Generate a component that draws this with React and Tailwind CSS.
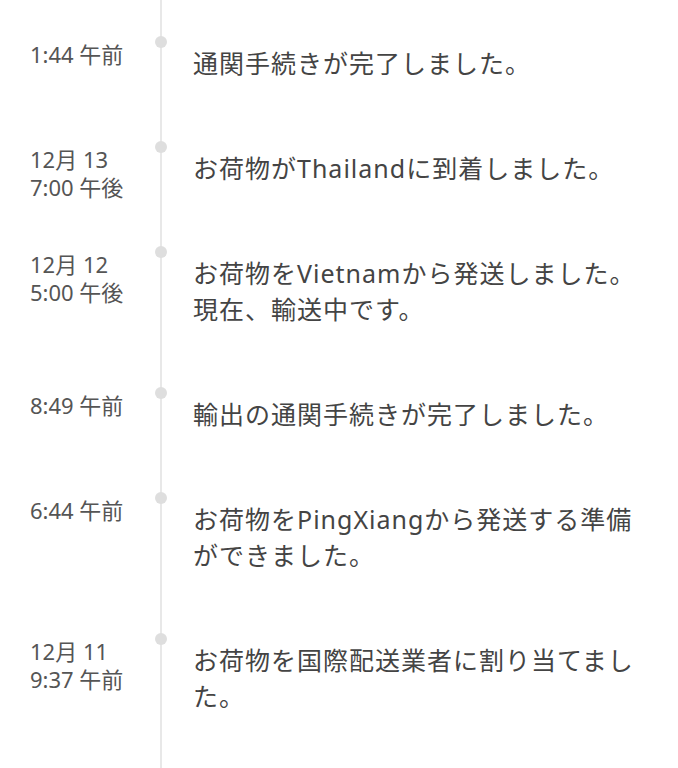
import React from 'react';

const events = [
  { time: ['1:44 午前'], text: ['通関手続きが完了しました。'] },
  { time: ['12月 13', '7:00 午後'], text: ['お荷物がThailandに到着しました。'] },
  { time: ['12月 12', '5:00 午後'], text: ['お荷物をVietnamから発送しました。', '現在、輸送中です。'] },
  { time: ['8:49 午前'], text: ['輸出の通関手続きが完了しました。'] },
  { time: ['6:44 午前'], text: ['お荷物をPingXiangから発送する準備', 'ができました。'] },
  { time: ['12月 11', '9:37 午前'], text: ['お荷物を国際配送業者に割り当てまし', 'た。'] }
];

const App = () => {
  return (
    <div
      className="relative h-[768px] overflow-hidden bg-white pt-[36px] pl-[30px]"
      style={{ fontFamily: '"Noto Sans", "Noto Sans CJK JP", sans-serif' }}
    >
      {/* timeline track */}
      <div className="absolute left-[160px] top-0 bottom-0 w-[2px] bg-[#e8e8e8]" />

      {events.map((ev, i) => (
        <div key={i} className="flex items-start">
          {/* time */}
          <div className="w-[125px] pt-[4px] text-[22px] leading-[28px] text-[#555]">
            {ev.time.map((t, j) => (
              <div key={j}>{t}</div>
            ))}
          </div>

          {/* dot */}
          <div className="w-[12px] shrink-0">
            <div className="relative h-[12px] w-[12px] rounded-full bg-[#dedede]" />
          </div>

          {/* message */}
          <div className="flex-1 pl-[26px] pt-[9px] pb-[60px] text-[25px] leading-[36px] tracking-[1px] text-[#444] whitespace-nowrap">
            {ev.text.map((t, j) => (
              <div key={j}>{t}</div>
            ))}
          </div>
        </div>
      ))}
    </div>
  );
};

export default App;
